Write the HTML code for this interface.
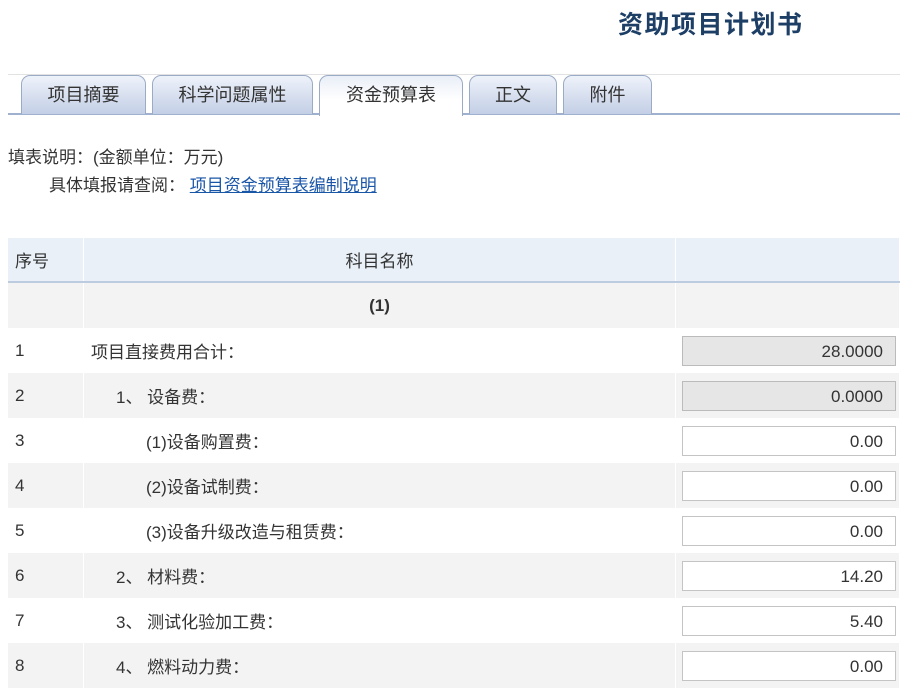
<!DOCTYPE html>
<html><head><meta charset="utf-8"><style>
body{margin:0;width:900px;height:665px;overflow:hidden;background:#fff;font-family:"Liberation Sans","Noto Sans CJK SC",sans-serif;color:#333;font-size:17px;}
.title{position:absolute;left:618px;top:5px;font-size:25px;font-weight:bold;color:#1d3f66;letter-spacing:1.5px;}
.topline{position:absolute;left:8px;right:0;top:74px;height:1px;background:#e2e2e2;}
.bline{position:absolute;left:8px;right:0;top:113px;height:2px;background:#9fb1ce;}
.tab{position:absolute;top:75px;height:39px;box-sizing:border-box;border:1px solid #9aabc6;border-bottom:none;border-radius:9px 9px 0 0;background:linear-gradient(#eef2fa,#c3cfe6);text-align:center;line-height:38px;font-size:18px;color:#333;}
.tab.act{background:linear-gradient(#e9eef7,#ffffff 60%);height:41px;z-index:2;border-color:#9aabc6;}
.note{position:absolute;left:8px;top:144px;line-height:28px;font-size:17px;}
.note a{color:#1a56a8;text-decoration:underline;}
table{position:absolute;left:8px;top:238px;width:892px;border-collapse:collapse;}
td{height:45px;padding:0;border-right:1px solid #fff;font-size:17px;vertical-align:middle;}
tr.h td{background:#e9f0f8;border-bottom:2px solid #bccbe0;height:43px;}
tr.g td{background:#f3f3f3;}
td.n{padding-left:7px;width:68px;}
td.v{width:223px;}
.in{margin-left:6px;width:214px;height:30px;box-sizing:border-box;border:1px solid #c4c4c4;background:#fff;text-align:right;padding-right:12px;line-height:30px;font-size:17px;}
.in.d{background:#e6e6e6;border-color:#bbb;}
</style></head><body>
<div class="title">资助项目计划书</div>
<div class="topline"></div>
<div class="bline"></div>
<div class="tab" style="left:21px;width:125px">项目摘要</div>
<div class="tab" style="left:152px;width:161px">科学问题属性</div>
<div class="tab act" style="left:319px;width:144px">资金预算表</div>
<div class="tab" style="left:469px;width:88px">正文</div>
<div class="tab" style="left:563px;width:89px">附件</div>
<div class="note">填表说明：(金额单位：万元)<br><span style="padding-left:41px">具体填报请查阅：&nbsp;<a>项目资金预算表编制说明</a></span></div>
<table>
<tr class="h"><td class="n">序号</td><td style="text-align:center">科目名称</td><td class="v"></td></tr>
<tr class="g"><td class="n"></td><td style="text-align:center;font-weight:bold">(1)</td><td class="v"></td></tr>
<tr><td class="n">1</td><td style="padding-left:7px">项目直接费用合计：</td><td class="v"><div class="in d">28.0000</div></td></tr>
<tr class="g"><td class="n">2</td><td style="padding-left:32px">1、 设备费：</td><td class="v"><div class="in d">0.0000</div></td></tr>
<tr><td class="n">3</td><td style="padding-left:62px">(1)设备购置费：</td><td class="v"><div class="in">0.00</div></td></tr>
<tr class="g"><td class="n">4</td><td style="padding-left:62px">(2)设备试制费：</td><td class="v"><div class="in">0.00</div></td></tr>
<tr><td class="n">5</td><td style="padding-left:62px">(3)设备升级改造与租赁费：</td><td class="v"><div class="in">0.00</div></td></tr>
<tr class="g"><td class="n">6</td><td style="padding-left:32px">2、 材料费：</td><td class="v"><div class="in">14.20</div></td></tr>
<tr><td class="n">7</td><td style="padding-left:32px">3、 测试化验加工费：</td><td class="v"><div class="in">5.40</div></td></tr>
<tr class="g"><td class="n">8</td><td style="padding-left:32px">4、 燃料动力费：</td><td class="v"><div class="in">0.00</div></td></tr>
</table>
</body></html>
